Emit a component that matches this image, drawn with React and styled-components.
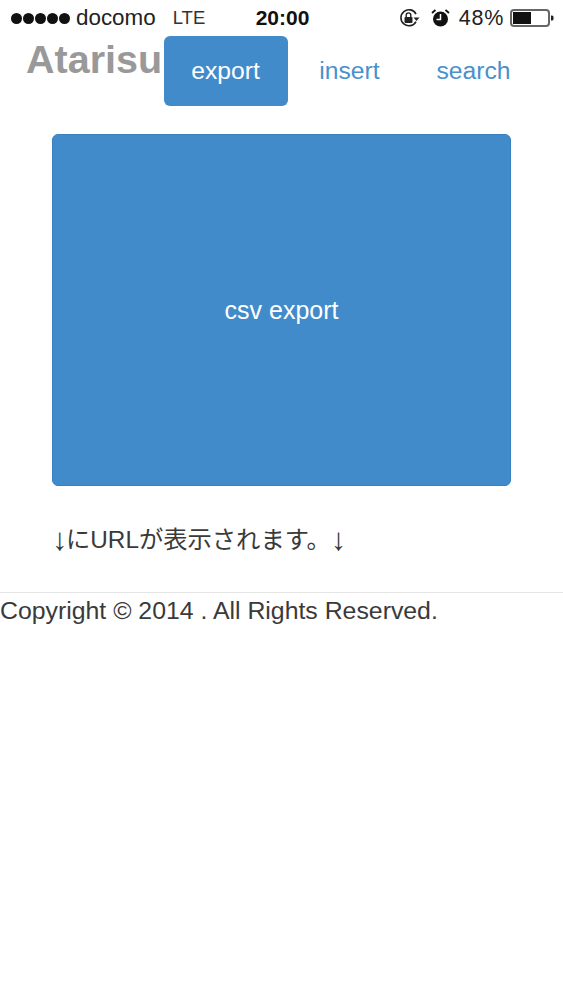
import React from 'react';
import styled, { createGlobalStyle } from 'styled-components';

const GlobalStyle = createGlobalStyle`
  html, body {
    margin: 0;
    padding: 0;
    background: #fff;
    color: #3a3a3a;
    font-family: "Liberation Sans", "Noto Sans CJK JP", sans-serif;
  }
  * { box-sizing: border-box; }
`;

const StatusBar = styled.div`
  display: grid;
  grid-template-columns: 1fr auto 1fr;
  align-items: center;
  height: 36px;
  padding: 0 9px 0 11px;
  font-size: 22.4px;
  color: #222;
`;
const StatusLeft = styled.div`
  display: flex;
  align-items: center;
`;
const Signal = styled.div`
  display: flex;
  gap: 1px;
  margin-right: 6px;
`;
const Dot = styled.span`
  width: 11px;
  height: 11px;
  border-radius: 50%;
  background: #111;
`;
const Carrier = styled.span`
  margin-right: 17px;
`;
const Network = styled.span`
  font-size: 18.5px;
  color: #333;
`;
const Clock = styled.span`
  font-weight: 700;
  font-size: 21px;
  color: #111;
`;
const StatusRight = styled.div`
  display: flex;
  align-items: center;
  justify-content: flex-end;
`;
const Battery = styled.svg`
  margin-left: 6px;
`;
const IconGap = styled.svg`
  margin-right: ${(p) => p.$gap}px;
`;
const Percent = styled.span`
  font-size: 21.5px;
  letter-spacing: 0.7px;
`;

const Header = styled.header`
  display: flex;
  height: 70px;
  padding-left: 26px;
`;
const Brand = styled.div`
  width: 138px;
  flex: none;
  padding-top: 3px;
  font-size: 39.5px;
  font-weight: 700;
  line-height: 40px;
  color: #999;
  white-space: nowrap;
`;
const Nav = styled.nav`
  display: grid;
  grid-template-columns: repeat(3, 124px);
`;
const NavLink = styled.a`
  display: flex;
  align-items: center;
  justify-content: center;
  padding-right: 1px;
  border-radius: 6px;
  font-size: 24.7px;
  color: ${(p) => (p.$active ? '#fff' : '#4a90cc')};
  background: ${(p) => (p.$active ? '#428bca' : 'transparent')};
`;

const Main = styled.main`
  padding: 28px 52px 0;
`;
const ExportButton = styled.button`
  display: flex;
  align-items: center;
  justify-content: center;
  width: 459px;
  height: 352px;
  padding: 0;
  border: 1px solid #3a80bd;
  border-radius: 6px;
  font: inherit;
  font-size: 25px;
  color: #fff;
  background: #428bca;
`;
const Note = styled.p`
  margin: 36px 0 0;
  font-size: 24.3px;
  line-height: 36px;
  white-space: nowrap;
`;
const Arrow = styled.span`
  display: inline-block;
  width: 14px;
  font-size: 31px;
  line-height: 36px;
  text-align: center;
  vertical-align: top;
`;

const Footer = styled.footer`
  margin-top: 34px;
  border-top: 1px solid #e5e5e5;
  font-size: 24.83px;
  line-height: 36px;
`;

export default function App() {
  return (
    <>
      <GlobalStyle />
      <StatusBar>
        <StatusLeft>
          <Signal>
            {[0, 1, 2, 3, 4].map((i) => (
              <Dot key={i} />
            ))}
          </Signal>
          <Carrier>docomo</Carrier>
          <Network>LTE</Network>
        </StatusLeft>
        <Clock>20:00</Clock>
        <StatusRight>
          <IconGap $gap={11} width="21" height="20" viewBox="0 0 21 20">
            <path d="M17 13.5A8 8 0 1 1 17 6" fill="none" stroke="#222" strokeWidth="1.6" />
            <path d="M14.5 9.5h6l-3 3.5z" fill="#222" />
            <rect x="5.5" y="9" width="8" height="6" rx="1" fill="#222" />
            <path d="M7.2 9V7.2a2.3 2.3 0 0 1 4.6 0V9" fill="none" stroke="#222" strokeWidth="1.4" />
          </IconGap>
          <IconGap $gap={9} width="19" height="20" viewBox="0 0 19 20">
            <circle cx="9.5" cy="11" r="7.5" fill="#111" />
            <path d="M9.5 6v5.5H5.5" fill="none" stroke="#fff" strokeWidth="1.5" />
            <path d="M1 5l3.5-3M18 5l-3.5-3" stroke="#111" strokeWidth="1.8" />
          </IconGap>
          <Percent>48%</Percent>
          <Battery width="44" height="18" viewBox="0 0 44 18">
            <rect x="1" y="1" width="38" height="16" rx="3" fill="#fff" stroke="#666" strokeWidth="2" />
            <rect x="3" y="3" width="18" height="12" fill="#111" />
            <path d="M41 6.5h1a1.5 1.5 0 0 1 1.5 1.5v2a1.5 1.5 0 0 1-1.5 1.5h-1z" fill="#222" />
          </Battery>
        </StatusRight>
      </StatusBar>
      <Header>
        <Brand>Atarisu</Brand>
        <Nav>
          <NavLink $active>export</NavLink>
          <NavLink>insert</NavLink>
          <NavLink>search</NavLink>
        </Nav>
      </Header>
      <Main>
        <ExportButton>csv export</ExportButton>
        <Note>
          <Arrow>↓</Arrow>にURLが表示されます。<Arrow>↓</Arrow>
        </Note>
      </Main>
      <Footer>Copyright © 2014 . All Rights Reserved.</Footer>
    </>
  );
}
